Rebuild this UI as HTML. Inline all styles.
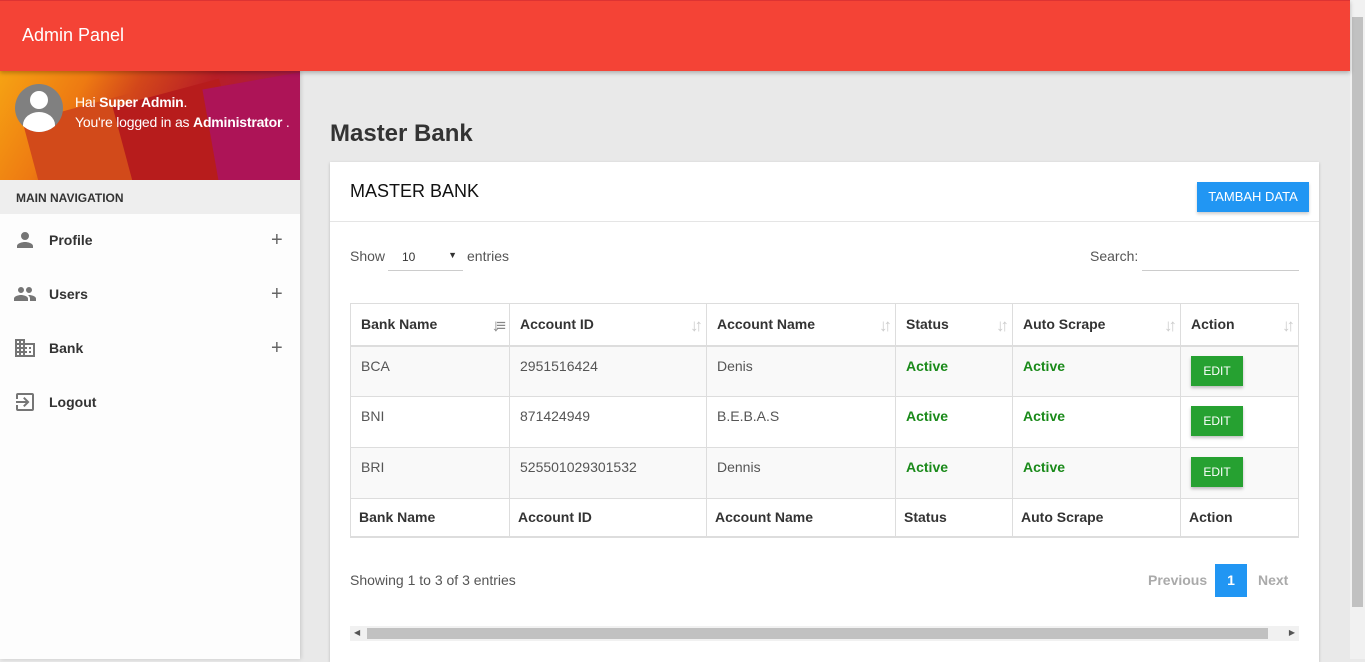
<!DOCTYPE html>
<html><head><meta charset="utf-8"><style>
*{box-sizing:border-box;margin:0;padding:0}
body{width:1365px;height:659px;overflow:hidden;font-family:"Liberation Sans",sans-serif;background:#e9e9e9;position:relative;color:#333}
.hdr{position:absolute;left:0;top:0;width:1350px;height:71px;background:#f44336;border-top:1px solid #d33;box-shadow:0 2px 4px rgba(0,0,0,.25);z-index:3}
.hdr span{position:absolute;left:22px;top:24px;color:#fff;font-size:18px}
.vsb{position:absolute;right:0;top:0;width:15px;height:659px;background:#f1f1f1}
.vsb div{position:absolute;left:2px;top:17px;width:11px;height:590px;background:#c1c1c1}
.side{position:absolute;left:0;top:71px;width:300px;height:588px;background:#fdfdfd;box-shadow:1px 0 4px rgba(0,0,0,.15)}
.ban{position:relative;height:109px;overflow:hidden;background:linear-gradient(120deg,#f6a313 0%,#ee7a12 25%,#d3471a 40%,#b81e26 60%,#b01c3a 75%,#a8165e 100%)}
.ban .s1{position:absolute;left:35px;top:35px;width:110px;height:110px;background:#d24a1a;transform:rotate(-15deg)}
.ban .s2{position:absolute;left:125px;top:20px;width:110px;height:110px;background:#b71c1c;transform:rotate(-15deg)}
.ban .s3{position:absolute;left:212px;top:8px;width:110px;height:120px;background:#ad1457;transform:rotate(-10deg)}
.av{position:absolute;left:15px;top:13px;width:48px;height:48px;border-radius:50%;background:#808080;overflow:hidden}
.av i{position:absolute;left:15px;top:7px;width:18px;height:18px;border-radius:50%;background:#fff}
.av b{position:absolute;left:8px;top:28px;width:32px;height:26px;border-radius:50% 50% 0 0;background:#fff}
.ut{position:absolute;left:75px;top:21px;color:#fff;font-size:14px;line-height:20px;letter-spacing:-.2px}
.nh{height:34px;background:#eee;font-size:12px;font-weight:bold;color:#333;padding:11px 16px}
.it{position:relative;height:54px;font-size:14px;font-weight:bold;color:#333}
.it span{position:absolute;left:49px;top:18px}
.it em{position:absolute;left:271px;top:15px;font-style:normal;font-weight:normal;font-size:20px;color:#666}
.it svg{position:absolute;left:13px;top:14px}
h1{position:absolute;left:330px;top:120px;font-size:24px;font-weight:bold;color:#333}
.card{position:absolute;left:330px;top:162px;width:989px;height:500px;background:#fff;box-shadow:0 1px 3px rgba(0,0,0,.2)}
.ch{height:60px;border-bottom:1px solid #e5e5e5;position:relative}
.ch span{position:absolute;left:20px;top:19px;font-size:18px;color:#111}
.btn{position:absolute;left:867px;top:20px;width:112px;height:30px;background:#2196f3;color:#fff;font-size:13px;text-align:center;line-height:30px;box-shadow:0 2px 3px rgba(0,0,0,.2)}
.t{position:absolute;font-size:14px;color:#555}
table{position:absolute;left:20px;top:141px;width:949px;border-collapse:collapse;font-size:14px}
td,th{border:1px solid #ddd;text-align:left;padding:0 10px;position:relative}
th{height:42px;font-weight:bold;color:#333;border-bottom:2px solid #ddd}
tbody td{height:51px;vertical-align:top;padding-top:11px;color:#555}
tbody tr:nth-child(odd){background:#f9f9f9}
tfoot th{height:38px;border-top:1px solid #ddd;border-bottom:2px solid #ddd;padding-left:8px}
th .so{position:absolute;right:7px;top:12px;color:#ccc;font-size:17px;font-weight:bold;letter-spacing:-4px}
.ac{color:#1a8a1a;font-weight:bold}
.ed{display:inline-block;width:52px;height:30px;background:#26a131;color:#fff;font-size:12px;text-align:center;line-height:30px;box-shadow:0 2px 3px rgba(0,0,0,.25);margin-top:-2px}
</style></head><body>
<div class="hdr"><span>Admin Panel</span></div>
<div class="vsb"><div></div></div>
<div class="side">
<div class="ban"><div class="s1"></div><div class="s2"></div><div class="s3"></div>
<div class="av"><i></i><b></b></div>
<div class="ut">Hai <b>Super Admin</b>.<br>You're logged in as <b>Administrator</b> .</div></div>
<div class="nh">MAIN NAVIGATION</div>
<div class="it"><svg width="24" height="24" viewBox="0 0 24 24"><path fill="#757575" d="M12 12a4 4 0 1 0 0-8 4 4 0 0 0 0 8zm0 2c-2.7 0-8 1.3-8 4v2h16v-2c0-2.7-5.3-4-8-4z"/></svg><span>Profile</span><em>+</em></div>
<div class="it"><svg width="24" height="24" viewBox="0 0 24 24"><path fill="#757575" d="M16 11a3 3 0 1 0 0-6 3 3 0 0 0 0 6zm-8 0a3 3 0 1 0 0-6 3 3 0 0 0 0 6zm0 2c-2.3 0-7 1.2-7 3.5V19h14v-2.5C15 14.2 10.3 13 8 13zm8 0c-.3 0-.6 0-1 .1 1.2.8 2 2 2 3.4V19h6v-2.5c0-2.3-4.7-3.5-7-3.5z"/></svg><span>Users</span><em>+</em></div>
<div class="it"><svg width="24" height="24" viewBox="0 0 24 24"><path fill="#757575" d="M12 7V3H2v18h20V7H12zM6 19H4v-2h2v2zm0-4H4v-2h2v2zm0-4H4V9h2v2zm0-4H4V5h2v2zm4 12H8v-2h2v2zm0-4H8v-2h2v2zm0-4H8V9h2v2zm0-4H8V5h2v2zm10 12h-8v-2h2v-2h-2v-2h2v-2h-2V9h8v10zm-2-8h-2v2h2v-2zm0 4h-2v2h2v-2z"/></svg><span>Bank</span><em>+</em></div>
<div class="it"><svg width="24" height="24" viewBox="0 0 24 24"><path fill="#757575" d="M10.1 15.6 11.5 17l5-5-5-5-1.4 1.4 2.6 2.6H3v2h9.7l-2.6 2.6zM19 3H5a2 2 0 0 0-2 2v4h2V5h14v14H5v-4H3v4a2 2 0 0 0 2 2h14a2 2 0 0 0 2-2V5a2 2 0 0 0-2-2z"/></svg><span>Logout</span></div>
</div>
<h1>Master Bank</h1>
<div class="card">
<div class="ch"><span>MASTER BANK</span><div class="btn">TAMBAH DATA</div></div>
<div class="t" style="left:20px;top:86px">Show</div>
<div style="position:absolute;left:58px;top:82px;width:75px;height:27px;border-bottom:1px solid #ccc;font-size:12px;color:#333;padding:6px 14px">10<span style="position:absolute;right:6px;font-size:9px">▼</span></div>
<div class="t" style="left:137px;top:86px">entries</div>
<div class="t" style="left:760px;top:86px">Search:</div>
<div style="position:absolute;left:812px;top:82px;width:157px;height:27px;border-bottom:1px solid #ccc"></div>
<table>
<thead><tr><th style="width:159px">Bank Name<span class="so" style="color:#888">↓≡</span></th><th style="width:197px">Account ID<span class="so">↓↑</span></th><th style="width:189px">Account Name<span class="so">↓↑</span></th><th style="width:117px">Status<span class="so">↓↑</span></th><th style="width:168px">Auto Scrape<span class="so">↓↑</span></th><th>Action<span class="so">↓↑</span></th></tr></thead>
<tbody>
<tr><td>BCA</td><td>2951516424</td><td>Denis</td><td class="ac">Active</td><td class="ac">Active</td><td><span class="ed">EDIT</span></td></tr>
<tr><td>BNI</td><td>871424949</td><td>B.E.B.A.S</td><td class="ac">Active</td><td class="ac">Active</td><td><span class="ed">EDIT</span></td></tr>
<tr><td>BRI</td><td>525501029301532</td><td>Dennis</td><td class="ac">Active</td><td class="ac">Active</td><td><span class="ed">EDIT</span></td></tr>
</tbody>
<tfoot><tr><th>Bank Name</th><th>Account ID</th><th>Account Name</th><th>Status</th><th>Auto Scrape</th><th>Action</th></tr></tfoot>
</table>
<div class="t" style="left:20px;top:410px">Showing 1 to 3 of 3 entries</div>
<div class="t" style="left:818px;top:410px;color:#aaa;font-weight:bold">Previous</div>
<div style="position:absolute;left:885px;top:402px;width:32px;height:33px;background:#2196f3;color:#fff;font-weight:bold;font-size:14px;text-align:center;line-height:33px">1</div>
<div class="t" style="left:928px;top:410px;color:#aaa;font-weight:bold">Next</div>
<div style="position:absolute;left:20px;top:464px;width:949px;height:15px;background:#f1f1f1"><div style="position:absolute;left:17px;top:2px;width:901px;height:11px;background:#c1c1c1"></div><span style="position:absolute;left:4px;top:2px;font-size:8px;color:#555">◀</span><span style="position:absolute;right:4px;top:2px;font-size:8px;color:#555">▶</span></div>
</div>
</body></html>
